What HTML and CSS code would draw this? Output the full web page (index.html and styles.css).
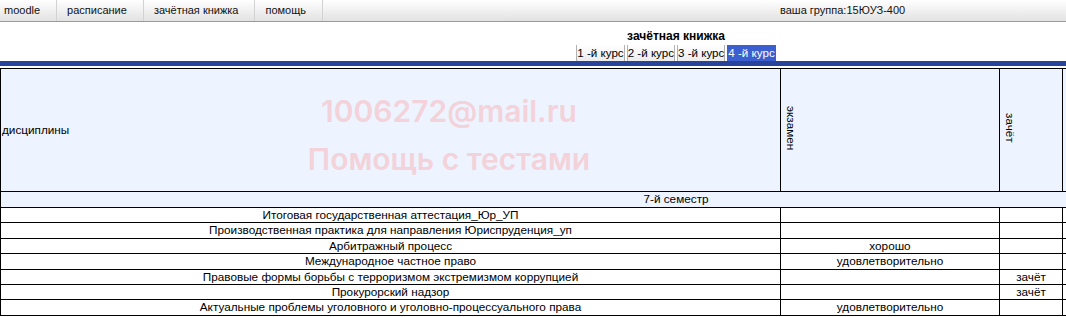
FILE: index.html
```html
<!DOCTYPE html>
<html lang="ru">
<head>
    <meta charset="UTF-8">
    <title>зачётная книжка</title>
    <link rel="stylesheet" href="styles.css">
</head>
<body>
    <div class="topbar">
        <a href="#" class="first">moodle</a>
        <a href="#">расписание</a>
        <a href="#">зачётная книжка</a>
        <a href="#">помощь</a>
        <div class="group">ваша группа:15ЮУЗ-400</div>
    </div>

    <div class="page">
        <div class="title">зачётная книжка</div>
        <div class="tabs">
            <span class="tab">1 -й курс</span>
            <span class="tab">2 -й курс</span>
            <span class="tab">3 -й курс</span>
            <span class="tab active">4 -й курс</span>
        </div>
        <div class="bar"></div>

        <table class="marks">
            <colgroup>
                <col class="c-name">
                <col class="c-exam">
                <col class="c-credit">
                <col>
            </colgroup>
            <tr class="head">
                <td class="left">дисциплины</td>
                <td><span class="vert">экзамен</span></td>
                <td><span class="vert">зачёт</span></td>
                <td><span class="vert">курсовая работа</span></td>
            </tr>
            <tr class="semester">
                <td colspan="4">7-й семестр</td>
            </tr>
            <tr><td>Итоговая государственная аттестация_Юр_УП</td><td></td><td></td><td></td></tr>
            <tr><td>Производственная практика для направления Юриспруденция_уп</td><td></td><td></td><td></td></tr>
            <tr><td>Арбитражный процесс</td><td>хорошо</td><td></td><td></td></tr>
            <tr><td>Международное частное право</td><td>удовлетворительно</td><td></td><td></td></tr>
            <tr><td>Правовые формы борьбы с терроризмом экстремизмом коррупцией</td><td></td><td>зачёт</td><td></td></tr>
            <tr><td>Прокурорский надзор</td><td></td><td>зачёт</td><td></td></tr>
            <tr><td>Актуальные проблемы уголовного и уголовно-процессуального права</td><td>удовлетворительно</td><td></td><td></td></tr>
        </table>

        <div class="watermark">
            <div>1006272@mail.ru</div>
            <div>Помощь с тестами</div>
        </div>
    </div>
</body>
</html>
```

FILE: styles.css
```css
html, body {
    overflow: hidden;
}

body {
    margin: 0;
    font-family: "Liberation Sans", Arial, sans-serif;
    font-size: 12px;
    color: #000;
    background: #fff;
}

.topbar {
    display: flex;
    height: 21px;
    line-height: 21px;
    font-size: 11px;
    border-bottom: 1px solid #9a9a9a;
    background: linear-gradient(#ffffff, #e2e2e2);
}

.topbar a {
    padding: 0 16px 0 10px;
    border-right: 1px solid #d2d2d2;
    color: #111;
    text-decoration: none;
}

.topbar a.first {
    padding-left: 4px;
}

.group {
    margin-left: auto;
    width: 286px;
    color: #111;
}

.page {
    position: relative;
    width: 1352px;
}

.title {
    margin-top: 7px;
    line-height: 14px;
    text-align: center;
    font-weight: bold;
}

.tabs {
    display: flex;
    justify-content: center;
    gap: 2px;
    margin-top: 2px;
    font-size: 11.6px;
}

.tab {
    padding: 0;
    line-height: 16px;
    border-left: 1px solid #b0b0b0;
    border-right: 1px solid #b0b0b0;
    background: linear-gradient(#ffffff, #ececec);
}

.tab.active {
    border-color: #3b5fcf;
    background: #3b5fcf;
    color: #fff;
}

.bar {
    height: 5px;
    margin-bottom: 2px;
    background: #27449a;
}

.marks {
    width: 1352px;
    border-collapse: collapse;
    table-layout: fixed;
    border: 1px solid #000;
    font-size: 11.75px;
}

.c-name {
    width: 780px;
}

.c-exam {
    width: 219px;
}

.c-credit {
    width: 63px;
}

.marks td {
    border: 1px solid #000;
    padding: 0;
    line-height: 14.4px;
    text-align: center;
    white-space: nowrap;
}

.marks .head td {
    height: 122px;
    background: #edf4ff;
    text-align: left;
    vertical-align: middle;
    padding-left: 3px;
}

.marks .head td.left {
    padding-left: 1px;
}

.vert {
    display: inline-block;
    writing-mode: vertical-rl;
}

.marks .semester td {
    height: 15px;
    background: #edf4ff;
}

.watermark {
    position: absolute;
    top: 58px;
    left: 0;
    width: 898px;
    text-align: center;
    font-family: Inter, "Noto Sans", sans-serif;
    font-size: 30px;
    font-weight: 600;
    line-height: 48px;
    color: #f3d2da;
    pointer-events: none;
}
```
